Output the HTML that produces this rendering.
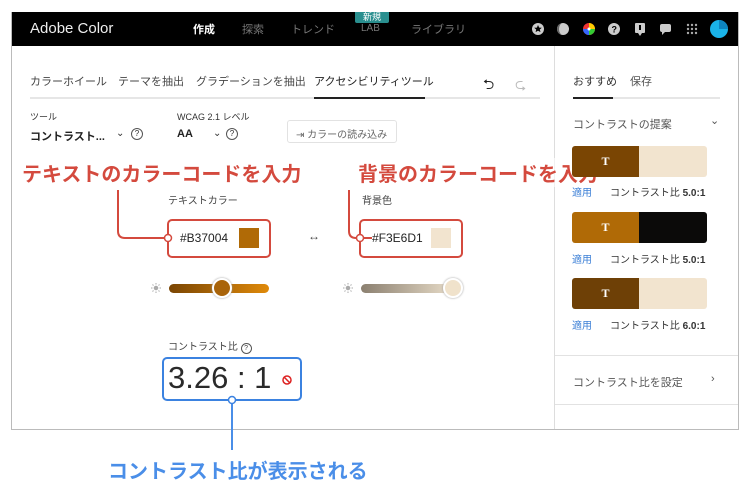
<!DOCTYPE html>
<html><head><meta charset="utf-8"><style>
*{margin:0;padding:0;box-sizing:border-box}
body{width:750px;height:501px;background:#fff;position:relative;overflow:hidden;font-family:"Liberation Sans","Noto Sans CJK JP",sans-serif;color:#2c2c2c}
.a{position:absolute;white-space:nowrap}
.s{font-size:11px;color:#333}
.g{font-size:11px;color:#555}
</style></head><body>
<div class="a" style="left:11px;top:12px;width:728px;height:418px;border:1px solid #bbb;border-top:none"></div>
<div class="a" style="left:12px;top:12px;width:726px;height:34px;background:#000"></div>
<div class="a" style="left:30px;top:20px;color:#eee;font-size:15px">Adobe Color</div>
<div class="a" style="left:193px;top:21px;color:#fff;font-size:11px;font-weight:bold">作成</div>
<div class="a" style="left:242px;top:21px;color:#777;font-size:11px">探索</div>
<div class="a" style="left:291px;top:21px;color:#777;font-size:11px">トレンド</div>
<div class="a" style="left:355px;top:12px;width:34px;height:11px;background:#2a8f8f;color:#fff;font-size:9px;text-align:center;line-height:11px;border-radius:0 0 2px 2px">新規</div>
<div class="a" style="left:361px;top:23px;color:#777;font-size:10px">LAB</div>
<div class="a" style="left:411px;top:21px;color:#777;font-size:11px">ライブラリ</div>
<svg class="a" style="left:530px;top:18px" width="210" height="22">
<circle cx="8" cy="11" r="6" fill="#ccc"/><path d="M8 7l1.2 2.6 2.6.2-2 1.7.7 2.6L8 12.7l-2.4 1.4.6-2.6-2-1.7 2.7-.2z" fill="#000"/>
<circle cx="33" cy="11" r="6" fill="#ccc"/><path d="M33 5a6 6 0 0 0 0 12a4 6 0 0 1 0-12" fill="#666"/>
<circle cx="59" cy="11" r="6" fill="#e33"/><path d="M59 11L59 5A6 6 0 0 1 65 11Z" fill="#fc0"/><path d="M59 11L65 11A6 6 0 0 1 59 17Z" fill="#3c3"/><path d="M59 11L59 17A6 6 0 0 1 53 11Z" fill="#36f"/><circle cx="59" cy="11" r="1.5" fill="#fff"/>
<circle cx="84" cy="11" r="6" fill="#ccc"/><text x="81.5" y="14.5" font-size="9" font-weight="bold" fill="#000">?</text>
<rect x="105" y="5" width="10" height="10" rx="1" fill="#ccc"/><path d="M108 15h4l-2 3z" fill="#ccc"/><rect x="109" y="7" width="2" height="5" fill="#000"/>
<rect x="130" y="6" width="11" height="8" rx="2" fill="#ccc"/><path d="M132 14h3l-3 3z" fill="#ccc"/>
<g fill="#aaa"><circle cx="158" cy="7" r="1.2"/><circle cx="162" cy="7" r="1.2"/><circle cx="166" cy="7" r="1.2"/><circle cx="158" cy="11" r="1.2"/><circle cx="162" cy="11" r="1.2"/><circle cx="166" cy="11" r="1.2"/><circle cx="158" cy="15" r="1.2"/><circle cx="162" cy="15" r="1.2"/><circle cx="166" cy="15" r="1.2"/></g>
<circle cx="189" cy="11" r="9" fill="#1ab3e8"/><path d="M189 11L189 2A9 9 0 0 1 198 11Z" fill="#0d85c0"/>
</svg>
<div class="a" style="left:554px;top:46px;width:1px;height:383px;background:#ddd"></div>
<div class="a g" style="left:30px;top:73px;color:#444">カラーホイール</div>
<div class="a g" style="left:118px;top:73px;color:#444">テーマを抽出</div>
<div class="a g" style="left:196px;top:73px;color:#444">グラデーションを抽出</div>
<div class="a s" style="left:314px;top:73px;color:#222">アクセシビリティツール</div>
<div class="a" style="left:30px;top:97px;width:510px;height:2px;background:#e6e6e6"></div>
<div class="a" style="left:314px;top:97px;width:111px;height:2px;background:#222"></div>
<div class="a" style="left:483px;top:74px;font-size:14px;color:#222">⮌</div>
<div class="a" style="left:515px;top:74px;font-size:14px;color:#bbb">⮎</div>
<div class="a s" style="left:573px;top:73px">おすすめ</div>
<div class="a g" style="left:630px;top:73px">保存</div>
<div class="a" style="left:573px;top:97px;width:147px;height:2px;background:#e6e6e6"></div>
<div class="a" style="left:573px;top:97px;width:40px;height:2px;background:#222"></div>
<div class="a" style="left:30px;top:110px;font-size:9px;color:#333">ツール</div>
<div class="a" style="left:30px;top:128px;font-size:11px;font-weight:bold;color:#222">コントラスト...</div>
<div class="a" style="left:116px;top:128px;font-size:10px;color:#333">⌄</div>
<div class="a" style="left:131px;top:128px;width:12px;height:12px;border:1px solid #555;border-radius:50%;font-size:8px;text-align:center;line-height:10px">?</div>
<div class="a" style="left:177px;top:110px;font-size:9px;color:#333">WCAG 2.1 レベル</div>
<div class="a" style="left:177px;top:128px;font-size:11px;font-weight:bold;color:#222">AA</div>
<div class="a" style="left:213px;top:128px;font-size:10px;color:#333">⌄</div>
<div class="a" style="left:226px;top:128px;width:12px;height:12px;border:1px solid #555;border-radius:50%;font-size:8px;text-align:center;line-height:10px">?</div>
<div class="a" style="left:287px;top:120px;width:110px;height:23px;border:1px solid #e2e2e2;border-radius:3px;font-size:10px;color:#666;padding:5px 0 0 8px">⇥ カラーの読み込み</div>
<div class="a" style="left:22px;top:158px;font-size:20px;font-weight:bold;color:#d44a3e">テキストのカラーコードを入力</div>
<div class="a" style="left:358px;top:158px;font-size:20px;font-weight:bold;color:#d44a3e;background:rgba(255,255,255,.6)">背景のカラーコードを入力</div>
<div class="a g" style="left:168px;top:192px;font-size:10px;color:#444">テキストカラー</div>
<div class="a g" style="left:362px;top:192px;font-size:10px;color:#444">背景色</div>
<svg class="a" style="left:0;top:0" width="750" height="501" fill="none">
<path d="M118 190V231q0 7 7 7h47" stroke="#d44a3e" stroke-width="2"/>
<path d="M349 190V231q0 7 7 7h16" stroke="#d44a3e" stroke-width="2"/>
<rect x="168" y="220" width="102" height="37" rx="4" stroke="#d44a3e" stroke-width="2"/>
<rect x="360" y="220" width="102" height="37" rx="4" stroke="#d44a3e" stroke-width="2"/>
<circle cx="168" cy="238" r="3.5" fill="#fff" stroke="#d44a3e" stroke-width="1.5"/>
<circle cx="360" cy="238" r="3.5" fill="#fff" stroke="#d44a3e" stroke-width="1.5"/>
<rect x="163" y="358" width="138" height="42" rx="4" stroke="#3b82e0" stroke-width="2"/>
<path d="M232 404V450" stroke="#4a8ee8" stroke-width="2"/>
<circle cx="232" cy="400" r="3.5" fill="#fff" stroke="#3b82e0" stroke-width="1.5"/>
<circle cx="287" cy="380" r="4" stroke="#d22" stroke-width="1.5"/><path d="M284.5 377.5l5 5" stroke="#d22" stroke-width="1.5"/>
<g stroke="#aaa" stroke-width="1"><circle cx="156" cy="288" r="1.8" fill="#aaa"/><path d="M156 283v1.5M156 291.5v1.5M151 288h1.5M159.5 288h1.5M152.5 284.5l1 1M158.5 290.5l1 1M152.5 291.5l1-1M158.5 285.5l1-1"/>
<circle cx="348" cy="288" r="1.8" fill="#aaa"/><path d="M348 283v1.5M348 291.5v1.5M343 288h1.5M351.5 288h1.5M344.5 284.5l1 1M350.5 290.5l1 1M344.5 291.5l1-1M350.5 285.5l1-1"/></g>
</svg>
<div class="a" style="left:180px;top:231px;font-size:12px;color:#222">#B37004</div>
<div class="a" style="left:239px;top:228px;width:20px;height:20px;background:#b06a06"></div>
<div class="a" style="left:308px;top:229px;font-size:12px;color:#444">↔</div>
<div class="a" style="left:372px;top:231px;font-size:12px;color:#222">#F3E6D1</div>
<div class="a" style="left:431px;top:228px;width:20px;height:20px;background:#f2e4cf"></div>
<div class="a" style="left:169px;top:284px;width:100px;height:9px;border-radius:5px;background:linear-gradient(90deg,#7a4503,#e08a0a)"></div>
<div class="a" style="left:212px;top:278px;width:20px;height:20px;border-radius:50%;background:#a9640a;border:2px solid #fff;box-shadow:0 0 2px #999"></div>
<div class="a" style="left:361px;top:284px;width:100px;height:9px;border-radius:5px;background:linear-gradient(90deg,#8b8070,#efe3cf)"></div>
<div class="a" style="left:443px;top:278px;width:20px;height:20px;border-radius:50%;background:#f0e2cb;border:2px solid #fff;box-shadow:0 0 2px #999"></div>
<div class="a" style="left:168px;top:338px;font-size:10px;color:#444">コントラスト比 <span style="display:inline-block;width:11px;height:11px;border:1px solid #555;border-radius:50%;font-size:7px;text-align:center;line-height:9px">?</span></div>
<div class="a" style="left:168px;top:360px;font-size:31px;color:#2a2a2a">3.26 : 1</div>
<div class="a" style="left:108px;top:455px;font-size:20px;font-weight:bold;color:#4a8ee8">コントラスト比が表示される</div>
<div class="a g" style="left:573px;top:116px">コントラストの提案</div>
<div class="a g" style="left:710px;top:114px">⌄</div>
<div class="a" style="left:572px;top:146px;width:67px;height:31px;background:#7a4503;border-radius:3px 0 0 3px;color:#fff;font-family:'Liberation Serif';font-size:12px;font-weight:bold;text-align:center;line-height:31px">T</div>
<div class="a" style="left:639px;top:146px;width:68px;height:31px;background:#f2e4cf;border-radius:0 3px 3px 0"></div>
<div class="a" style="left:572px;top:184px;font-size:10px;color:#3b7fd6">適用</div>
<div class="a" style="left:610px;top:184px;font-size:10px;color:#333">コントラスト比 <b>5.0:1</b></div>
<div class="a" style="left:572px;top:212px;width:67px;height:31px;background:#b06a06;border-radius:3px 0 0 3px;color:#fff;font-family:'Liberation Serif';font-size:12px;font-weight:bold;text-align:center;line-height:31px">T</div>
<div class="a" style="left:639px;top:212px;width:68px;height:31px;background:#0b0a09;border-radius:0 3px 3px 0"></div>
<div class="a" style="left:572px;top:251px;font-size:10px;color:#3b7fd6">適用</div>
<div class="a" style="left:610px;top:251px;font-size:10px;color:#333">コントラスト比 <b>5.0:1</b></div>
<div class="a" style="left:572px;top:278px;width:67px;height:31px;background:#6e4006;border-radius:3px 0 0 3px;color:#fff;font-family:'Liberation Serif';font-size:12px;font-weight:bold;text-align:center;line-height:31px">T</div>
<div class="a" style="left:639px;top:278px;width:68px;height:31px;background:#f2e4cf;border-radius:0 3px 3px 0"></div>
<div class="a" style="left:572px;top:317px;font-size:10px;color:#3b7fd6">適用</div>
<div class="a" style="left:610px;top:317px;font-size:10px;color:#333">コントラスト比 <b>6.0:1</b></div>
<div class="a" style="left:555px;top:355px;width:183px;height:1px;background:#e2e2e2"></div>
<div class="a g" style="left:573px;top:374px">コントラスト比を設定</div>
<div class="a g" style="left:711px;top:373px">›</div>
<div class="a" style="left:555px;top:404px;width:183px;height:1px;background:#e2e2e2"></div>
</body></html>
